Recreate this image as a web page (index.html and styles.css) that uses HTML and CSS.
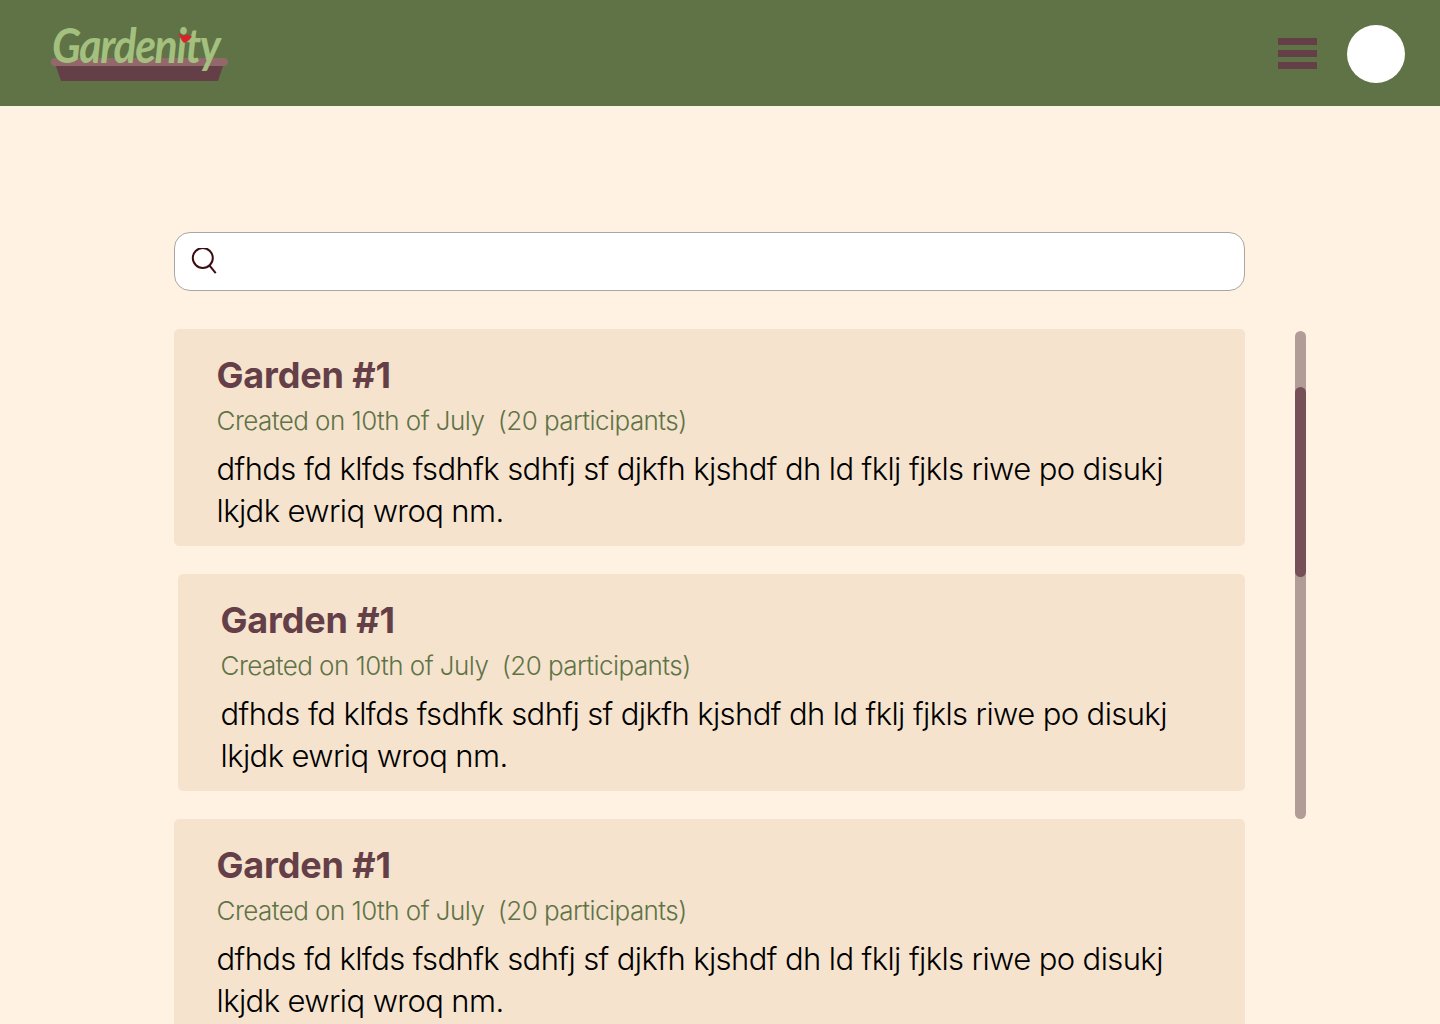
FILE: index.html
```html
<!DOCTYPE html>
<html lang="en">
<head>
    <meta charset="UTF-8">
    <meta name="viewport" content="width=device-width, initial-scale=1.0">
    <title>Gardenity</title>
    <link rel="stylesheet" href="styles.css">
</head>
<body>
    <header class="topbar">
        <a class="logo" href="#">
            <span class="pot"><span class="pot-rim"></span><span class="pot-body"></span></span>
            <span class="logo-word">Gardenity</span>
            <svg class="logo-flower" width="14" height="14" viewBox="0 0 14 14">
                <path d="M4.300 0h1v3h-1z" fill="#a3c07f"/>
                <path d="M0 2 L3.500 3.500 L5.500 5 L9 3.500 L14 5.500 C12.500 8 10 10.500 6 12 L3.500 9 C3 6.500 1.500 4.500 0 2z" fill="#d8232a"/>
            </svg>
        </a>
        <div class="topbar-right">
            <button class="menu-btn" aria-label="Menu"><span></span><span></span><span></span></button>
            <div class="avatar"></div>
        </div>
    </header>

    <main class="content">
        <div class="search">
            <svg class="search-icon" width="28" height="28" viewBox="0 0 28 28" fill="none" stroke="#3a0d12" stroke-width="2">
                <circle cx="12.800" cy="10" r="10"/>
                <path d="M19 16.800 L25.700 25.200"/>
            </svg>
            <input type="text" class="search-input">
        </div>

        <div class="list-wrap">
            <div class="garden-list">
                <div class="garden">
                    <h2>Garden #1</h2>
                    <p class="garden-meta">Created on 10th of July &nbsp;(20 participants)</p>
                    <p class="garden-text">dfhds fd klfds fsdhfk sdhfj sf djkfh kjshdf dh ld fklj fjkls riwe po disukj lkjdk ewriq wroq nm.</p>
                </div>
                <div class="garden garden-hover">
                    <h2>Garden #1</h2>
                    <p class="garden-meta">Created on 10th of July &nbsp;(20 participants)</p>
                    <p class="garden-text">dfhds fd klfds fsdhfk sdhfj sf djkfh kjshdf dh ld fklj fjkls riwe po disukj lkjdk ewriq wroq nm.</p>
                </div>
                <div class="garden">
                    <h2>Garden #1</h2>
                    <p class="garden-meta">Created on 10th of July &nbsp;(20 participants)</p>
                    <p class="garden-text">dfhds fd klfds fsdhfk sdhfj sf djkfh kjshdf dh ld fklj fjkls riwe po disukj lkjdk ewriq wroq nm.</p>
                </div>
            </div>
            <div class="scroll-track"><div class="scroll-thumb"></div></div>
        </div>
    </main>
</body>
</html>
```

FILE: styles.css
```css
html, body {
    height: 100%;
    overflow: hidden;
}
body {
    margin: 0;
    background-color: #fff2e3;
    font-family: "Inter", "Open Sans", sans-serif;
}
.topbar {
    height: 106px;
    box-sizing: border-box;
    background-color: #5f7346;
    display: flex;
    justify-content: space-between;
    align-items: center;
    padding: 2px 35px 0 51px;
}
.logo {
    position: relative;
    display: block;
    width: 178px;
    height: 58px;
    text-decoration: none;
}
.logo-word {
    position: absolute;
    left: 1px;
    top: -5px;
    font-family: "Lato", sans-serif;
    font-style: italic;
    font-weight: 700;
    font-size: 47px;
    line-height: 50px;
    letter-spacing: -1.500px;
    color: #a3c07f;
    transform: scaleX(0.91);
    transform-origin: left;
}
.logo-flower {
    position: absolute;
    left: 127px;
    top: 6px;
}
.pot {
    position: absolute;
    left: 0;
    top: 33px;
    width: 177px;
}
.pot-rim {
    display: block;
    height: 8px;
    border-radius: 4px;
    background-color: #93686a;
}
.pot-body {
    display: block;
    height: 15px;
    margin: 0 5px;
    background-color: #643f47;
    clip-path: polygon(0 0, 100% 0, 97% 100%, 3% 100%);
}
.topbar-right {
    display: flex;
    align-items: center;
    gap: 30px;
}
.menu-btn {
    display: flex;
    flex-direction: column;
    gap: 5px;
    width: 39px;
    margin-bottom: 1px;
    padding: 0;
    border: none;
    background: none;
}
.menu-btn span {
    display: block;
    height: 7px;
    background-color: #643f47;
}
.avatar {
    width: 58px;
    height: 58px;
    border-radius: 50%;
    background-color: #fff;
}
.content {
    padding: 126px 0 0 174px;
}
.search {
    width: 1071px;
    height: 59px;
    box-sizing: border-box;
    display: flex;
    align-items: center;
    gap: 6px;
    padding: 0 15px;
    background-color: #fff;
    border: 1px solid #aaa6a2;
    border-radius: 16px;
}
.search-icon {
    flex-shrink: 0;
}
.search-input {
    flex-grow: 1;
    height: 40px;
    border: none;
    outline: none;
    font-size: 20px;
}
.list-wrap {
    display: flex;
    align-items: flex-start;
    margin-top: 38px;
}
.garden-list {
    width: 1071px;
    display: flex;
    flex-direction: column;
    gap: 28px;
}
.garden {
    height: 217px;
    box-sizing: border-box;
    padding: 25px 42.500px 0;
    background-color: #f5e3ce;
    border-radius: 5px;
}
.garden-hover {
    margin-left: 4px;
}
.garden h2 {
    margin: 0;
    font-size: 36px;
    line-height: 42px;
    font-weight: 700;
    letter-spacing: -0.150px;
    color: #643f47;
}
.garden-meta {
    margin: 9px 0 0;
    font-size: 26px;
    line-height: 32px;
    font-weight: 300;
    letter-spacing: -0.550px;
    color: #5f7346;
}
.garden-text {
    margin: 11px 0 0;
    font-size: 31px;
    line-height: 42px;
    font-weight: 300;
    letter-spacing: -0.600px;
    color: #000;
}
.scroll-track {
    width: 11px;
    height: 488px;
    margin: 2px 0 0 50px;
    padding-top: 56px;
    box-sizing: border-box;
    border-radius: 6px;
    background-color: #b29c97;
}
.scroll-thumb {
    height: 190px;
    border-radius: 6px;
    background-color: #765058;
}
```
